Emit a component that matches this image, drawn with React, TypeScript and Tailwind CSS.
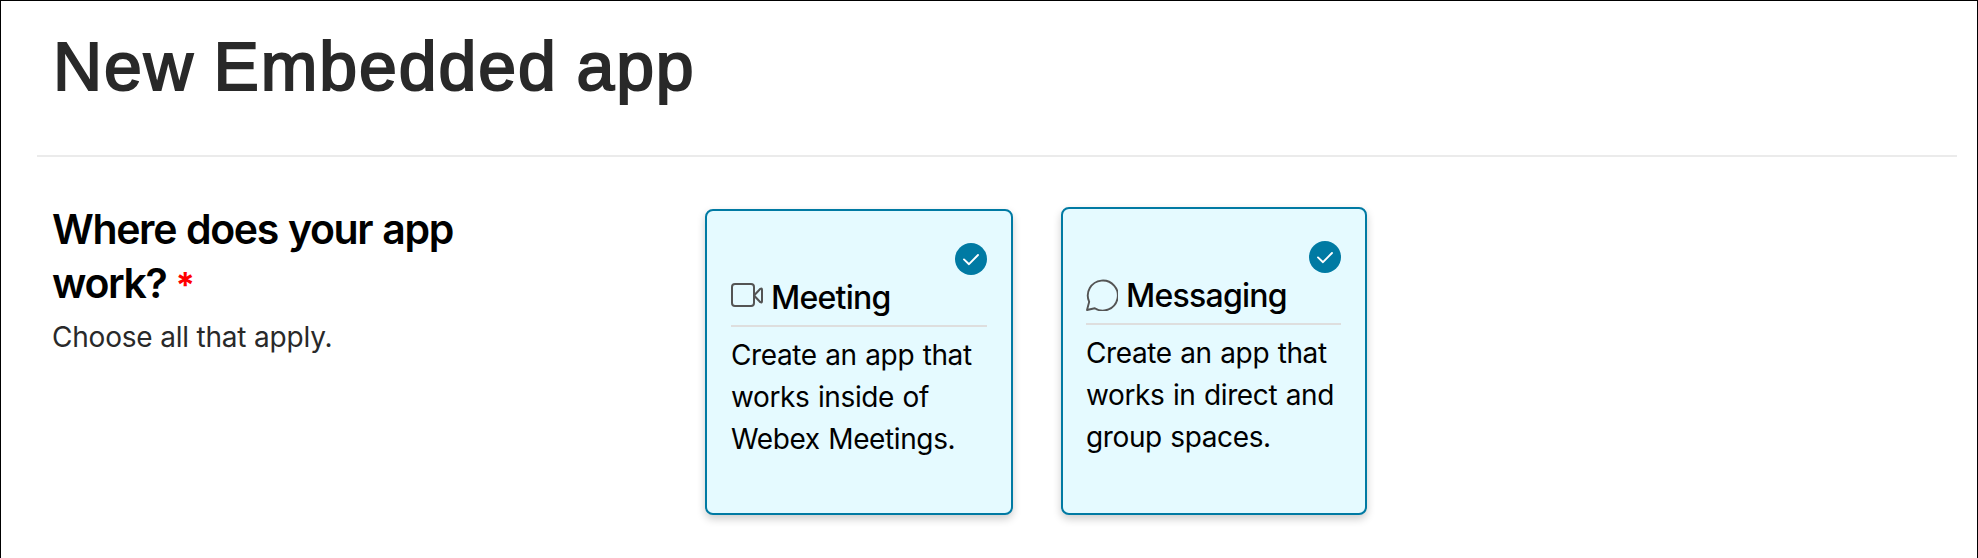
import type { ReactNode } from "react";

function CheckBadge() {
  return (
    <svg className="block size-8 shrink-0" viewBox="0 0 32 32" fill="none">
      <circle cx="16" cy="16" r="16" fill="#007aa3" />
      <path d="M9 16.4L14 21.2L23 12" stroke="#fff" strokeWidth="1.9" strokeLinecap="round" strokeLinejoin="round" />
    </svg>
  );
}

function CameraIcon() {
  return (
    <svg className="block size-8 shrink-0" viewBox="0 0 32 32" fill="none" stroke="#545454" strokeWidth="2" strokeLinejoin="round">
      <rect x="1" y="5" width="22" height="22" rx="3" />
      <path d="M23.5 16L29.4 9.8Q31 8.8 31 10.8V22.2Q31 24.2 29.4 23.2L23.5 17Z" />
    </svg>
  );
}

function ChatIcon() {
  return (
    <svg className="mt-[2px] block size-8 shrink-0" viewBox="0 0 32 32" fill="none" stroke="#545454" strokeWidth="1.9" strokeLinejoin="round">
      <path d="M3.2 22.8A15 15 0 1 1 8.8 29.2L1 31Z" />
    </svg>
  );
}

function Card({ icon, title, lines, className }: { icon: ReactNode; title: string; lines: string[]; className: string }) {
  return (
    <button className={"flex shrink-0 flex-col rounded-lg border-2 border-[#007aa3] bg-[#e5faff] pr-6 pt-8 text-left shadow-[0_4px_8px_rgba(0,0,0,0.2)] " + className}>
      <span className="flex w-full justify-end">
        <CheckBadge />
      </span>
      <span className="flex h-[52px] w-full border-b-2 border-[#dedede] pt-1">
        {icon}
        <span className="-mt-px ml-2 whitespace-nowrap text-[32px] font-medium leading-[40px] tracking-[-0.75px]">{title}</span>
      </span>
      <span className="mt-[7px] block text-[28px] leading-[42px] tracking-[-0.38px] [word-spacing:1px]">
        {lines.map((line) => (
          <span key={line} className="block whitespace-nowrap">{line}</span>
        ))}
      </span>
    </button>
  );
}

export default function App() {
  return (
    <main className="h-[558px] w-full border-x border-t border-black bg-white pl-9 pr-5 font-['Inter','Liberation_Sans',sans-serif] text-black">
      <header className="flex h-[156px] border-b-2 border-[#ebebeb] pl-4 pt-[25px]">
        <h1 className="whitespace-nowrap font-['Liberation_Sans',Arial,sans-serif] text-[68px] leading-[80px] tracking-[1.9px] text-[#292929] [-webkit-text-stroke:2px_#292929] [word-spacing:-2px]">
          New Embedded app
        </h1>
      </header>
      <section className="flex items-end pt-[50px]">
        <div className="-mt-[5px] w-[668px] shrink-0 self-start pl-[15px]">
          <h2 className="whitespace-nowrap text-[41px] font-semibold leading-[54px] tracking-[-1.35px] [word-spacing:1px]">
            Where does your app
            <br />
            work? <span className="-ml-px inline-block h-[54px] align-top text-[35px] font-bold leading-[58px] text-[#ff0000]">*</span>
          </h2>
          <p className="mt-[6px] whitespace-nowrap text-[28px] leading-[42px] tracking-[-0.2px] text-[#292929]">Choose all that apply.</p>
        </div>
        <Card
          icon={<CameraIcon />}
          title="Meeting"
          lines={["Create an app that", "works inside of", "Webex Meetings."]}
          className="h-[306px] w-[308px] pl-6"
        />
        <Card
          icon={<ChatIcon />}
          title="Messaging"
          lines={["Create an app that", "works in direct and", "group spaces."]}
          className="ml-12 h-[308px] w-[306px] pl-[23px]"
        />
      </section>
    </main>
  );
}
